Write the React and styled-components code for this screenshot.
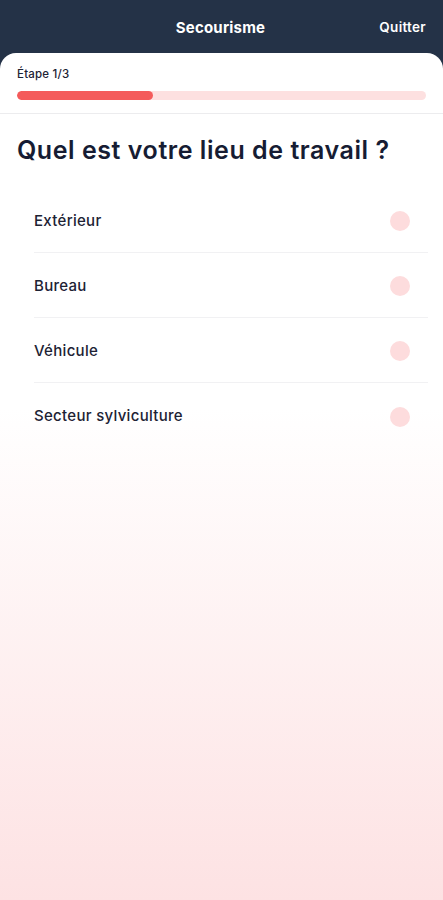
import React from "react";
import styled, { createGlobalStyle } from "styled-components";

const Global = createGlobalStyle`
  html, body { margin: 0; padding: 0; background: #243247; }
  body { font-family: Inter, "Noto Sans", sans-serif; -webkit-font-smoothing: antialiased; }
`;

const Page = styled.div`
  width: 443px;
  min-height: 900px;
  display: flex;
  flex-direction: column;
  background: #243247;
`;

const Header = styled.header`
  height: 53px;
  display: flex;
  align-items: center;
  justify-content: center;
  position: relative;
  color: #fff;
`;

const Title = styled.h1`
  margin: 1px 0 0;
  font-size: 15px;
  font-weight: 700;
  letter-spacing: 0.2px;
  transform: translateX(-1px);
`;

const Quit = styled.button`
  position: absolute;
  right: 17px;
  top: 19px;
  background: none;
  border: 0;
  padding: 0;
  color: #fff;
  font-family: inherit;
  font-size: 13.5px;
  font-weight: 600;
  letter-spacing: 0.3px;
`;

const Card = styled.main`
  flex: 1;
  border-radius: 16px 16px 0 0;
  background: linear-gradient(to bottom, #ffffff 0%, #ffffff 42%, #fde2e3 100%);
  display: flex;
  flex-direction: column;
`;

const Progress = styled.section`
  padding: 14px 17px 13px;
  border-bottom: 1px solid #ececee;
`;

const StepLabel = styled.div`
  font-size: 11.5px;
  font-weight: 500;
  color: #1d2234;
  line-height: 14px;
  letter-spacing: 0.2px;
`;

const Track = styled.div`
  margin-top: 10px;
  height: 9px;
  border-radius: 5px;
  background: #fde0e0;
  overflow: hidden;
`;

const Fill = styled.div`
  height: 100%;
  border-radius: 5px;
  background: #f45b5b;
`;

const Question = styled.h2`
  margin: 21px 17px 0;
  font-size: 25px;
  line-height: 30px;
  font-weight: 600;
  color: #161c33;
  letter-spacing: 0.55px;
`;

const Options = styled.ul`
  list-style: none;
  margin: 23px 15px 0 34px;
  padding: 0;
`;

const Option = styled.li`
  height: 65px;
  display: flex;
  align-items: center;
  justify-content: space-between;
  padding-right: 18px;
  border-bottom: ${(p) => (p.$last ? "none" : "1px solid #f1f1f3")};
  box-sizing: border-box;
  font-size: 15px;
  font-weight: 500;
  letter-spacing: 0.3px;
  color: #1d2234;
`;

const Radio = styled.span`
  width: 20px;
  height: 20px;
  border-radius: 50%;
  background: #fddcdd;
  margin-top: 2px;
`;

const options = ["Extérieur", "Bureau", "Véhicule", "Secteur sylviculture"];

export default function App() {
  const step = 1;
  const total = 3;
  return (
    <Page>
      <Global />
      <Header>
        <Title>Secourisme</Title>
        <Quit>Quitter</Quit>
      </Header>
      <Card>
        <Progress>
          <StepLabel>Étape {step}/{total}</StepLabel>
          <Track>
            <Fill style={{ width: `${(step / total) * 100}%` }} />
          </Track>
        </Progress>
        <Question>Quel est votre lieu de travail ?</Question>
        <Options>
          {options.map((o, i) => (
            <Option key={o} $last={i === options.length - 1}>
              <span>{o}</span>
              <Radio />
            </Option>
          ))}
        </Options>
      </Card>
    </Page>
  );
}
